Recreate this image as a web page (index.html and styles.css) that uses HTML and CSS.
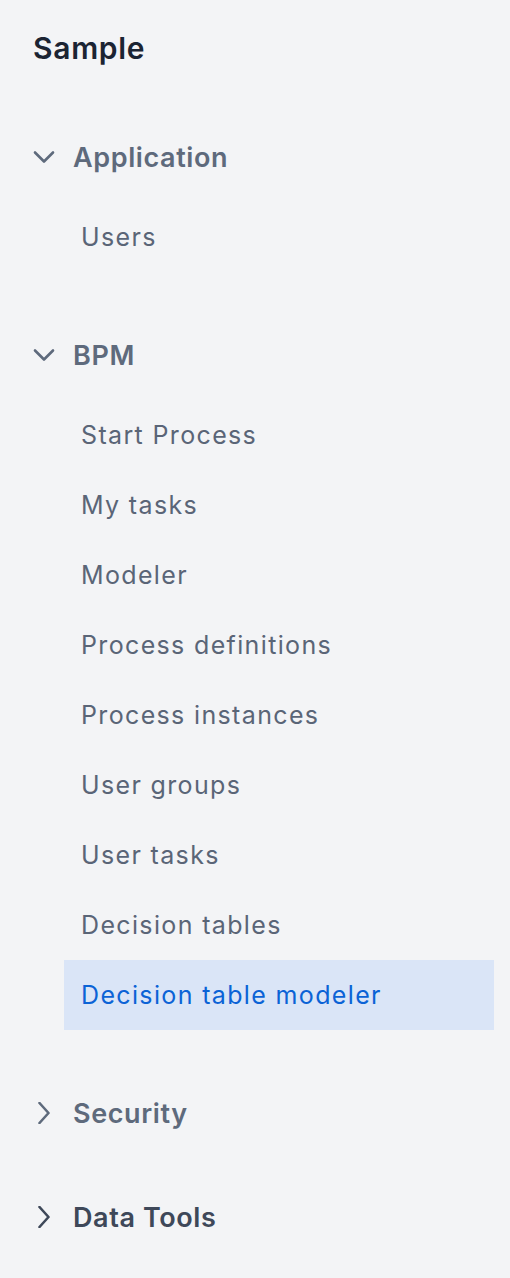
FILE: index.html
```html
<!DOCTYPE html>
<html lang="en">
<head>
  <meta charset="UTF-8">
  <title>Sample</title>
  <link rel="stylesheet" href="styles.css">
</head>
<body>
  <nav class="sidebar">
    <h1 class="title">Sample</h1>

    <div class="group">
      <div class="group-header">
        <svg class="chev" viewBox="0 0 22 22"><path d="M2 6.5 L11 15.5 L20 6.5"/></svg>
        <span>Application</span>
      </div>
      <ul class="items">
        <li>Users</li>
      </ul>
    </div>

    <div class="group">
      <div class="group-header">
        <svg class="chev" viewBox="0 0 22 22"><path d="M2 6.5 L11 15.5 L20 6.5"/></svg>
        <span>BPM</span>
      </div>
      <ul class="items">
        <li>Start Process</li>
        <li>My tasks</li>
        <li>Modeler</li>
        <li>Process definitions</li>
        <li>Process instances</li>
        <li>User groups</li>
        <li>User tasks</li>
        <li>Decision tables</li>
        <li class="active">Decision table modeler</li>
      </ul>
    </div>

    <div class="group closed">
      <div class="group-header">
        <svg class="chev" viewBox="0 0 22 22"><path d="M6.5 1 L15.5 11 L6.5 21"/></svg>
        <span>Security</span>
      </div>
    </div>

    <div class="group closed">
      <div class="group-header dark">
        <svg class="chev" viewBox="0 0 22 22"><path d="M6.5 1 L15.5 11 L6.5 21"/></svg>
        <span>Data Tools</span>
      </div>
    </div>
  </nav>
</body>
</html>
```

FILE: styles.css
```css
body {
  margin: 0;
  background-color: #f3f4f6;
  font-family: Inter, "Noto Sans", sans-serif;
}

.sidebar {
  padding: 30px 16px 0 33px;
}

.title {
  margin: 0 0 70px 0;
  font-size: 30px;
  line-height: 36px;
  font-weight: 600;
  letter-spacing: 0.7px;
  color: #1b2433;
}

.group {
  margin-bottom: 62px;
}

.group-header {
  display: flex;
  align-items: center;
  gap: 18px;
  height: 42px;
  font-size: 27px;
  font-weight: 600;
  letter-spacing: 0.6px;
  color: #5e6a7c;
}

.group-header.dark {
  color: #3e4859;
}

.chev {
  width: 22px;
  height: 22px;
  fill: none;
  stroke: currentColor;
  stroke-width: 2.6;
  stroke-linecap: round;
  stroke-linejoin: round;
}

.items {
  list-style: none;
  margin: 24px 0 0 31px;
  padding: 0;
}

.items li {
  height: 70px;
  display: flex;
  align-items: center;
  padding-left: 17px;
  font-size: 25px;
  letter-spacing: 1.35px;
  color: #5a6577;
}

.items li.active {
  background-color: #dae5f7;
  color: #0b63d6;
}
```
